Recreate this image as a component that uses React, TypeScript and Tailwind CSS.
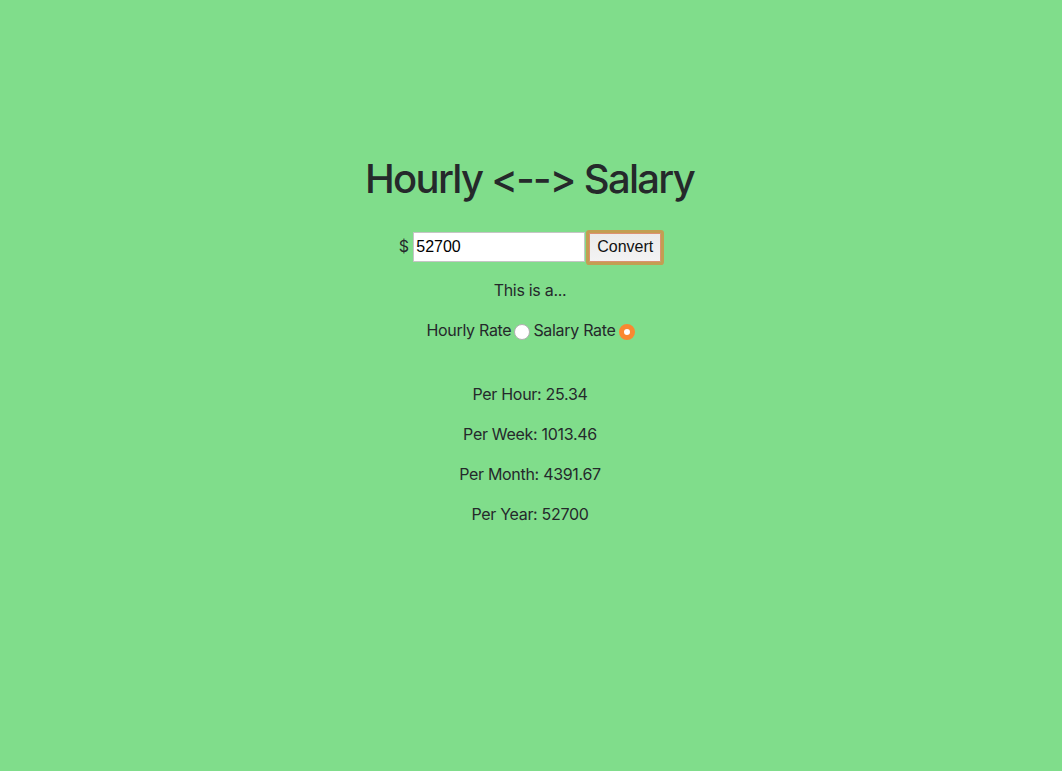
import { useState } from "react";

export default function App() {
  const [mode, setMode] = useState("salary");
  return (
    <main className="flex h-[771px] flex-col items-center bg-[#80dd8b] pt-[155px] font-['Inter','Liberation_Sans',sans-serif] text-base leading-6 tracking-[-0.3px] text-[#25292b]">
      <h1 className="mr-[3px] text-[40px] font-medium leading-[48px] tracking-[-1.7px]">Hourly &lt;--&gt; Salary</h1>
      <div className="mr-[2px] mt-[27px] flex h-8 items-center">
        <span className="mr-[4.5px]">$</span>
        <input aria-label="Amount" defaultValue="52700" className="mt-[2px] h-[30px] w-[172px] border border-[#c5c5c5] bg-white px-[2px] font-['Liberation_Sans',sans-serif] tracking-normal text-black outline-none" />
        <button className="relative ml-[4px] mt-[2px] h-[29px] w-[72px] rounded-[1px] border border-[#dd9170] bg-gradient-to-b from-[#ebebeb] to-[#f3f3f3] font-['Liberation_Sans',sans-serif] tracking-normal text-[#111] ring-[3px] ring-[#c39e52]">Convert</button>
      </div>
      <p className="mr-[2px] mt-4">This is a...</p>
      <div className="mr-px mt-4 flex h-6 items-center">
        <label htmlFor="hourly">Hourly Rate</label>
        <input id="hourly" type="radio" name="rate" checked={mode === "hourly"} onChange={() => setMode("hourly")} className="ml-[3px] mr-[3px] mt-[3px] size-4 appearance-none rounded-full border border-[#b0b0b0] bg-white checked:border-[5px] checked:border-[#fa8831]" />
        <label htmlFor="salary">Salary Rate</label>
        <input id="salary" type="radio" name="rate" checked={mode === "salary"} onChange={() => setMode("salary")} className="ml-[3px] mt-[3px] size-4 appearance-none rounded-full border border-[#b0b0b0] bg-white checked:border-[5px] checked:border-[#fa8831]" />
      </div>
      <div className="mr-[2px] mt-10 flex flex-col items-center gap-4">
        <p>Per Hour: 25.34</p>
        <p>Per Week: 1013.46</p>
        <p>Per Month: 4391.67</p>
        <p>Per Year: 52700</p>
      </div>
    </main>
  );
}
